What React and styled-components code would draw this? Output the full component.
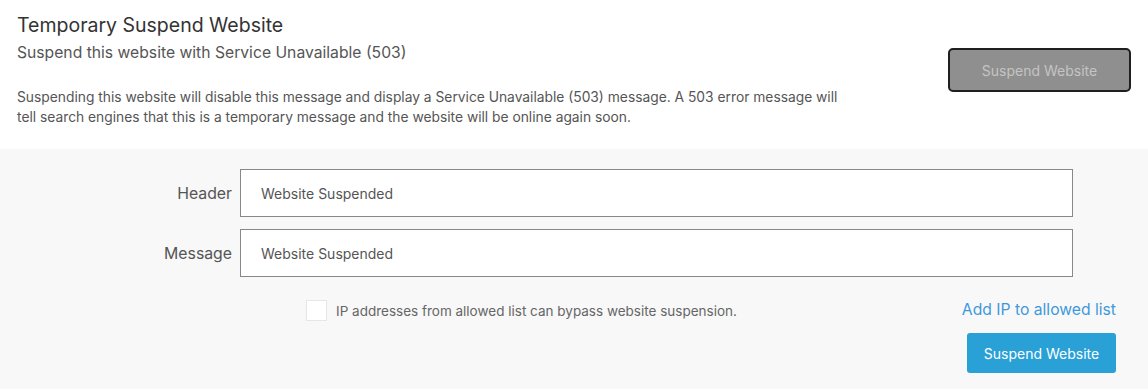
import styled, { createGlobalStyle } from "styled-components";

const GlobalStyle = createGlobalStyle`
  body {
    margin: 0;
    background: #ffffff;
    font-family: Inter, "Noto Sans", sans-serif;
  }
`;

const Page = styled.div`
  width: 1148px;
  height: 389px;
  display: flex;
  flex-direction: column;
  overflow: hidden;
`;

const Intro = styled.section`
  height: 149px;
  box-sizing: border-box;
  padding: 13px 17px 0 17px;
  display: flex;
  justify-content: space-between;
  background: #ffffff;
`;

const IntroText = styled.div`
  display: flex;
  flex-direction: column;
`;

const Title = styled.h1`
  margin: 0;
  font-size: 19.5px;
  font-weight: 400;
  line-height: 24px;
  color: #333333;
`;

const Subtitle = styled.h2`
  margin: 5px 0 0;
  font-size: 15.7px;
  font-weight: 400;
  line-height: 22px;
  color: #555555;
`;

const Description = styled.p`
  margin: 24px 0 0;
  max-width: 832px;
  font-size: 13.8px;
  line-height: 19.5px;
  color: #555555;
`;

const Button = styled.button`
  font-family: inherit;
  font-size: 14px;
  box-sizing: border-box;
  cursor: pointer;
  border-radius: ${(p) => (p.$disabled ? "5px" : "3px")};
  border: ${(p) => (p.$disabled ? "2px solid #1f1f1f" : "none")};
  background: ${(p) => (p.$disabled ? "#8f8f8f" : "#29a0d6")};
  color: ${(p) => (p.$disabled ? "#c4c4c4" : "#ffffff")};
  width: ${(p) => (p.$disabled ? "183px" : "149px")};
  height: ${(p) => (p.$disabled ? "44px" : "40px")};
`;

const TopButton = styled(Button)`
  margin-top: 35px;
`;

const Settings = styled.section`
  flex: 1;
  background: #f8f8f8;
  padding: 20px 32px 0 0;
  display: flex;
  flex-direction: column;
`;

const Fields = styled.div`
  display: grid;
  grid-template-columns: 232px 1fr;
  column-gap: 8px;
  row-gap: 12px;
  padding-right: 43px;
  align-items: center;
`;

const Label = styled.label`
  text-align: right;
  font-size: 15.8px;
  color: #555555;
`;

const Input = styled.input`
  height: 48px;
  box-sizing: border-box;
  border: 1px solid #888888;
  background: #ffffff;
  padding: 0 20px;
  font-family: inherit;
  font-size: 14px;
  color: #555555;
  outline: none;
`;

const OptionRow = styled.div`
  margin-top: 23px;
  display: flex;
  align-items: center;
  justify-content: space-between;
  padding-left: 306px;
`;

const CheckLabel = styled.label`
  display: flex;
  align-items: center;
  gap: 9px;
  font-size: 13.5px;
  color: #666666;
`;

const Box = styled.span`
  width: 21px;
  height: 21px;
  box-sizing: border-box;
  border: 1px solid #e6e6e6;
  background: #ffffff;
`;

const AllowLink = styled.a`
  font-size: 15.7px;
  color: #3f98dc;
  text-decoration: none;
  margin-top: -2px;
`;

const Actions = styled.div`
  display: flex;
  justify-content: flex-end;
  margin-top: 12px;
`;

export default function App() {
  return (
    <>
      <GlobalStyle />
      <Page>
        <Intro>
          <IntroText>
            <Title>Temporary Suspend Website</Title>
            <Subtitle>Suspend this website with Service Unavailable (503)</Subtitle>
            <Description>
              Suspending this website will disable this message and display a Service Unavailable (503)
              message. A 503 error message will tell search engines that this is a temporary message and
              the website will be online again soon.
            </Description>
          </IntroText>
          <TopButton $disabled>Suspend Website</TopButton>
        </Intro>
        <Settings>
          <Fields>
            <Label>Header</Label>
            <Input defaultValue="Website Suspended" />
            <Label>Message</Label>
            <Input defaultValue="Website Suspended" />
          </Fields>
          <OptionRow>
            <CheckLabel>
              <Box />
              IP addresses from allowed list can bypass website suspension.
            </CheckLabel>
            <AllowLink href="#">Add IP to allowed list</AllowLink>
          </OptionRow>
          <Actions>
            <Button>Suspend Website</Button>
          </Actions>
        </Settings>
      </Page>
    </>
  );
}
